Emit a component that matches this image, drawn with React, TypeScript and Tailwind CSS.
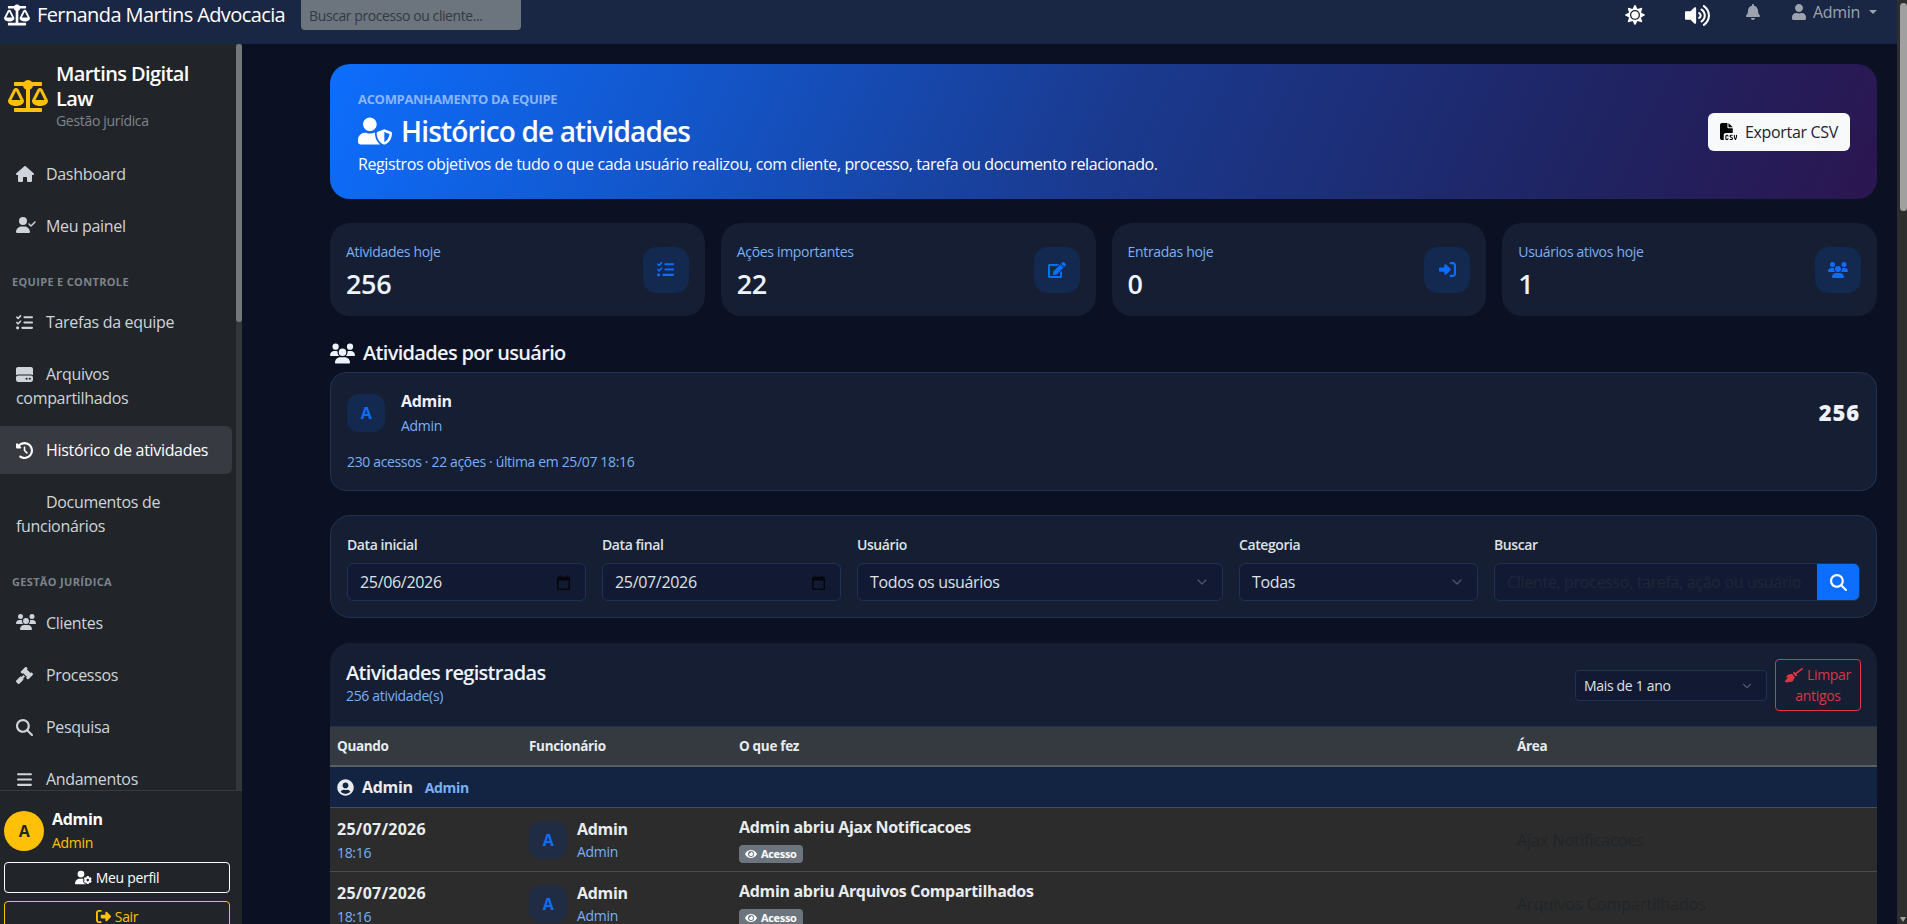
import { FaBalanceScale, FaBell, FaBroom, FaEdit, FaEye, FaSun, FaUser, FaUserCircle, FaUserShield, FaVolumeUp } from 'react-icons/fa';
import {
  FaBars, FaClockRotateLeft, FaFileCsv, FaGavel, FaHardDrive, FaHouse, FaListCheck, FaMagnifyingGlass,
  FaRightFromBracket, FaRightToBracket, FaUserCheck, FaUserGear, FaUsers,
} from 'react-icons/fa6';
import { ChevronDown } from 'lucide-react';
import type { ReactNode } from 'react';

const font = "font-['Open_Sans',sans-serif] tracking-[-0.02em]";

const NavItem = ({ icon, label, active }: { icon?: ReactNode; label: string; active?: boolean }) => (
  <a className={`mb-1 block rounded-r-md py-3 pl-4 pr-5 text-[16px] leading-[24px] ${active ? 'bg-[#373a40] text-white' : 'text-[#ced4da]'}`}>
    <span className="mr-[10px] inline-block w-[20px] align-[-3px]">{icon}</span>
    {label}
  </a>
);

const SectionLabel = ({ label }: { label: string }) => (
  <div className="px-3 text-[11px] font-bold uppercase leading-[16px] tracking-[0.03em] text-[#7d848b]">{label}</div>
);

const Stat = ({ label, value, icon }: { label: string; value: string; icon: ReactNode }) => (
  <div className="flex h-[93px] items-center justify-between rounded-[20px] bg-[#151e32] px-4">
    <div className="pt-[3px]">
      <div className="text-[14px] leading-[20px] text-[#79b0f5]">{label}</div>
      <div className="mt-[6px] text-[27px] font-semibold leading-[32px] text-[#eef2fb]">{value}</div>
    </div>
    <div className="flex h-[46px] w-[46px] items-center justify-center rounded-[14px] bg-[#13294f] text-[#0d6efd]">{icon}</div>
  </div>
);

const Field = ({ label, className, children }: { label: string; className: string; children: ReactNode }) => (
  <div className={className}>
    <div className="mb-[8px] text-[14px] font-semibold leading-[21px] tracking-[-0.03em] text-[#dee2e6]">{label}</div>
    {children}
  </div>
);

const CalendarGlyph = () => (
  <svg width="13" height="15" viewBox="0 0 13 15" fill="none" className="text-[#05070c]">
    <rect x="0.75" y="2.5" width="11.5" height="11.75" rx="1" stroke="currentColor" strokeWidth="1.5" />
    <rect x="0.75" y="2.5" width="11.5" height="3" fill="currentColor" />
    <rect x="2.5" y="0.5" width="1.5" height="2.5" fill="currentColor" />
    <rect x="9" y="0.5" width="1.5" height="2.5" fill="currentColor" />
  </svg>
);

const DateBox = ({ value }: { value: string }) => (
  <div className="flex h-[38px] items-center justify-between rounded-[6px] border border-[#1e3354] bg-[#121a33] pl-3 pr-[15px] text-[16px] text-[#dee2e6]">
    {value}
    <CalendarGlyph />
  </div>
);

const SelectBox = ({ value }: { value: string }) => (
  <div className="flex h-[38px] items-center justify-between rounded-[6px] border border-[#1e3354] bg-[#121a33] pl-3 pr-3 text-[16px] text-[#dee2e6]">
    {value}
    <ChevronDown size={16} className="text-[#4a5568]" />
  </div>
);

const Row = ({ action, area }: { action: string; area: string }) => (
  <div className="grid h-[64px] shrink-0 grid-cols-[192px_210px_778px_1fr] border-b border-[#4a4d50] bg-[#2c2c2c] px-[7px]">
    <div className="pt-[10px]">
      <div className="text-[16px] font-bold leading-[23px] tracking-[0.015em] text-[#e9ecef]">25/07/2026</div>
      <div className="text-[14px] leading-[23px] text-[#79b0f5]">18:16</div>
    </div>
    <div className="flex items-center gap-[10px]">
      <div className="flex h-[38px] w-[38px] items-center justify-center rounded-[12px] bg-[#202c44] text-[16px] font-bold text-[#0d6efd]">A</div>
      <div>
        <div className="text-[16px] font-bold leading-[23px] text-[#e9ecef]">Admin</div>
        <div className="text-[14px] leading-[21px] text-[#79b0f5]">Admin</div>
      </div>
    </div>
    <div className="pt-[8px]">
      <div className="text-[16px] font-bold leading-[23px] text-[#e9ecef]">{action}</div>
      <span className="mt-[6px] inline-flex h-[18px] items-center gap-1 rounded-[4px] bg-[#6c757d] px-[6px] text-[11px] font-bold tracking-[-0.03em] text-white">
        <FaEye className="text-[12px]" /> Acesso
      </span>
    </div>
    <div className="flex items-center text-[16px] tracking-normal text-[#212529]">{area}</div>
  </div>
);

export default function App() {
  return (
    <div className={`flex h-screen overflow-hidden bg-[#0b1122] ${font}`}>
      <div className="flex min-w-0 flex-1 flex-col">
        <header className="flex h-[44px] shrink-0 items-start bg-[#1a2744] pl-1 text-white">
          <div className="flex h-[30px] items-center">
            <FaBalanceScale className="text-[26px]" />
            <span className="ml-[7px] text-[20px] tracking-[-0.03em]">Fernanda Martins Advocacia</span>
          </div>
          <div className="ml-[16px] flex h-[30px] w-[220px] items-center rounded-b-[4px] bg-[#6c757d] px-2 text-[14px] tracking-[-0.03em] text-[#343a40]">Buscar processo ou cliente...</div>
          <div className="ml-auto flex h-[30px] items-center pr-[20px]">
            <FaSun className="mr-[40px] text-[20px]" />
            <FaVolumeUp className="mr-[35px] text-[25px]" />
            <FaBell className="mr-[30px] -mt-[6px] text-[16px] text-[#9ca3af]" />
            <FaUser className="mr-[6px] -mt-[6px] text-[16px] text-[#9ca3af]" />
            <span className="-mt-[6px] text-[16px] text-[#9ca3af]">Admin</span>
            <span className="-mt-[6px] ml-[9px] h-0 w-0 border-x-[4px] border-t-[4px] border-x-transparent border-t-[#9ca3af]" />
          </div>
        </header>
        <div className="flex min-h-0 flex-1">
          <aside className="flex w-[242px] shrink-0 flex-col bg-[#212529]">
            <div className="flex min-h-0 flex-1">
              <nav className="min-w-0 flex-1 overflow-hidden pr-1">
                <div className="flex items-center pl-2 pt-[17px]">
                  <FaBalanceScale className="shrink-0 text-[40px] text-[#ffc107]" />
                  <div className="ml-2 w-[150px]">
                    <div className="text-[20px] font-semibold leading-[25px] tracking-[-0.03em] text-white">Martins Digital Law</div>
                    <div className="text-[14px] leading-[20px] text-[#7d848b]">Gestão jurídica</div>
                  </div>
                </div>
                <div className="mt-[19px]">
                  <NavItem icon={<FaHouse className="text-[18px]" />} label="Dashboard" />
                  <NavItem icon={<FaUserCheck className="text-[20px]" />} label="Meu painel" />
                </div>
                <div className="mt-[24px]"><SectionLabel label="Equipe e controle" /></div>
                <div className="mt-[8px]">
                  <NavItem icon={<FaListCheck className="text-[17px]" />} label="Tarefas da equipe" />
                  <NavItem icon={<FaHardDrive className="text-[17px]" />} label="Arquivos compartilhados" />
                  <NavItem icon={<FaClockRotateLeft className="text-[17px]" />} label="Histórico de atividades" active />
                  <NavItem label="Documentos de funcionários" />
                </div>
                <div className="mt-[24px]"><SectionLabel label="Gestão jurídica" /></div>
                <div className="mt-[9px]">
                  <NavItem icon={<FaUsers className="text-[20px]" />} label="Clientes" />
                  <NavItem icon={<FaGavel className="text-[17px]" />} label="Processos" />
                  <NavItem icon={<FaMagnifyingGlass className="text-[17px]" />} label="Pesquisa" />
                  <NavItem icon={<FaBars className="text-[17px]" />} label="Andamentos" />
                </div>
              </nav>
              <div className="w-[6px] shrink-0 bg-[#33373c]">
                <div className="h-[278px] rounded-full bg-[#74777b]" />
              </div>
            </div>
            <div className="h-[134px] shrink-0 overflow-hidden border-t border-[#373b40] px-1 pt-[16px]">
              <div className="flex items-center gap-2">
                <div className="flex h-[40px] w-[40px] items-center justify-center rounded-full bg-[#ffc107] text-[16px] font-bold text-[#212529]">A</div>
                <div>
                  <div className="text-[16px] font-bold leading-[24px] text-white">Admin</div>
                  <div className="text-[14px] leading-[24px] text-[#ffc107]">Admin</div>
                </div>
              </div>
              <div className="mt-[7px] flex h-[31px] w-[226px] items-center justify-center gap-1 rounded-[4px] border border-white text-[14px] text-white">
                <FaUserGear className="text-[17px]" /> Meu perfil
              </div>
              <div className="mt-[8px] flex h-[31px] w-[226px] items-center justify-center gap-1 rounded-[4px] border border-[#ffc107] text-[14px] text-[#ffc107]">
                <FaRightFromBracket className="text-[15px]" /> Sair
              </div>
            </div>
          </aside>
          <main className="flex min-w-0 flex-1 flex-col overflow-hidden pl-[88px] pr-[20px] pt-[20px]">
            <section className="flex h-[135px] shrink-0 items-center justify-between rounded-[20px] bg-[linear-gradient(115deg,#0d6efd_0%,#1a3a8f_50%,#1f2463_80%,#2b1650_100%)] pl-[28px] pr-[27px]">
              <div className="pt-[1px]">
                <div className="text-[13px] font-bold uppercase leading-[20px] text-[#8ab6fa]">Acompanhamento da equipe</div>
                <h1 className="mt-[5px] flex items-center text-[28px] font-semibold leading-[34px] tracking-[-0.03em] text-white">
                  <FaUserShield className="mr-[9px] text-[34px]" /> Histórico de atividades
                </h1>
                <p className="mt-[4px] text-[16px] leading-[24px] tracking-[-0.025em] text-white">Registros objetivos de tudo o que cada usuário realizou, com cliente, processo, tarefa ou documento relacionado.</p>
              </div>
              <div className="flex h-[38px] w-[142px] items-center justify-center gap-2 rounded-[6px] bg-[#f8f9fa] text-[16px] text-[#212529]">
                <FaFileCsv className="text-[17px] text-black" /> Exportar CSV
              </div>
            </section>
            <section className="mt-[24px] grid shrink-0 grid-cols-4 gap-4">
              <Stat label="Atividades hoje" value="256" icon={<FaListCheck className="text-[17px]" />} />
              <Stat label="Ações importantes" value="22" icon={<FaEdit className="text-[18px]" />} />
              <Stat label="Entradas hoje" value="0" icon={<FaRightToBracket className="text-[17px]" />} />
              <Stat label="Usuários ativos hoje" value="1" icon={<FaUsers className="text-[20px]" />} />
            </section>
            <h2 className="mb-[5px] mt-[23px] flex h-[28px] shrink-0 items-center gap-2 text-[20px] font-semibold tracking-[-0.034em] text-[#eef2fb]">
              <FaUsers className="text-[25px]" /> Atividades por usuário
            </h2>
            <section className="h-[119px] shrink-0 rounded-[16px] border border-[#1e3354] bg-[#151e32] px-4 pt-[21px]">
              <div className="flex items-start justify-between">
                <div className="flex">
                  <div className="flex h-[38px] w-[38px] items-center justify-center rounded-[12px] bg-[#13294f] text-[16px] font-bold text-[#0d6efd]">A</div>
                  <div className="ml-4">
                    <div className="-mt-[4px] text-[16px] font-bold leading-[23px] text-[#eef2fb]">Admin</div>
                    <div className="text-[14px] leading-[26px] text-[#79b0f5]">Admin</div>
                  </div>
                </div>
                <div className="mt-[3px] text-[22px] font-extrabold leading-[30px] tracking-[0.04em] text-[#eef2fb]">256</div>
              </div>
              <div className="mt-[13px] text-[14px] leading-[20px] tracking-[-0.025em] text-[#79b0f5]">230 acessos · 22 ações · última em 25/07 18:16</div>
            </section>
            <section className="mt-[24px] flex h-[103px] shrink-0 gap-4 rounded-[20px] border border-[#1e3354] bg-[#151e32] px-4 pt-[18px]">
              <Field label="Data inicial" className="w-[239px]"><DateBox value="25/06/2026" /></Field>
              <Field label="Data final" className="w-[239px]"><DateBox value="25/07/2026" /></Field>
              <Field label="Usuário" className="w-[366px]"><SelectBox value="Todos os usuários" /></Field>
              <Field label="Categoria" className="w-[239px]"><SelectBox value="Todas" /></Field>
              <Field label="Buscar" className="min-w-0 flex-1">
                <div className="flex h-[38px] overflow-hidden rounded-[6px] border border-[#1e3354] bg-[#121a33]">
                  <div className="min-w-0 flex-1 overflow-hidden whitespace-nowrap pl-3 text-[16px] leading-[36px] text-[#1e2738]">Cliente, processo, tarefa, ação ou usuário</div>
                  <div className="flex w-[42px] shrink-0 items-center justify-center bg-[#0d6efd] text-[17px] text-white"><FaMagnifyingGlass /></div>
                </div>
              </Field>
            </section>
            <section className="mt-[25px] flex min-h-0 flex-1 flex-col overflow-hidden rounded-t-[20px] bg-[#151e32]">
              <div className="flex h-[84px] shrink-0 items-start justify-between border-b border-[#1e3354] pl-4 pr-4">
                <div className="pt-[17px]">
                  <div className="text-[20px] font-semibold leading-[26px] tracking-[-0.034em] text-[#eef2fb]">Atividades registradas</div>
                  <div className="text-[14px] leading-[20px] text-[#79b0f5]">256 atividade(s)</div>
                </div>
                <div className="flex items-start gap-2 pt-[16px]">
                  <div className="mt-[11px] flex h-[31px] w-[192px] items-center justify-between rounded-[4px] border border-[#1e3354] bg-[#121a33] pl-2 pr-3 text-[14px] text-[#dee2e6]">
                    Mais de 1 ano
                    <ChevronDown size={14} className="text-[#4a5568]" />
                  </div>
                  <div className="flex h-[52px] w-[86px] flex-col items-center justify-center rounded-[4px] border border-[#dc3545] text-[14px] leading-[21px] text-[#dc3545]">
                    <span className="flex items-center gap-1"><FaBroom className="text-[18px]" /> Limpar</span>
                    <span>antigos</span>
                  </div>
                </div>
              </div>
              <div className="grid h-[40px] shrink-0 grid-cols-[192px_210px_778px_1fr] items-center border-b-2 border-[#5a5e63] bg-[#343a40] px-[7px] text-[13.5px] font-bold text-[#e9ecef]">
                <div>Quando</div>
                <div>Funcionário</div>
                <div>O que fez</div>
                <div>Área</div>
              </div>
              <div className="flex h-[41px] shrink-0 items-center border-b border-[#4a4d50] bg-[#132442] px-[7px]">
                <FaUserCircle className="text-[17px] text-[#e9ecef]" />
                <span className="ml-2 text-[16px] font-bold text-[#e9ecef]">Admin</span>
                <span className="ml-3 text-[14px] font-bold text-[#79b0f5]">Admin</span>
              </div>
              <Row action="Admin abriu Ajax Notificacoes" area="Ajax Notificacoes" />
              <Row action="Admin abriu Arquivos Compartilhados" area="Arquivos Compartilhados" />
            </section>
          </main>
        </div>
      </div>
      <div className="flex w-[10px] shrink-0 flex-col bg-[#2e2e2e] pl-[3px] pt-[3px]">
        <div className="h-[208px] rounded-full bg-[#a0a0a0]" />
        <div className="mb-[2px] mt-auto h-0 w-0 border-x-[3.5px] border-t-[5px] border-x-transparent border-t-[#a0a0a0]" />
      </div>
    </div>
  );
}
